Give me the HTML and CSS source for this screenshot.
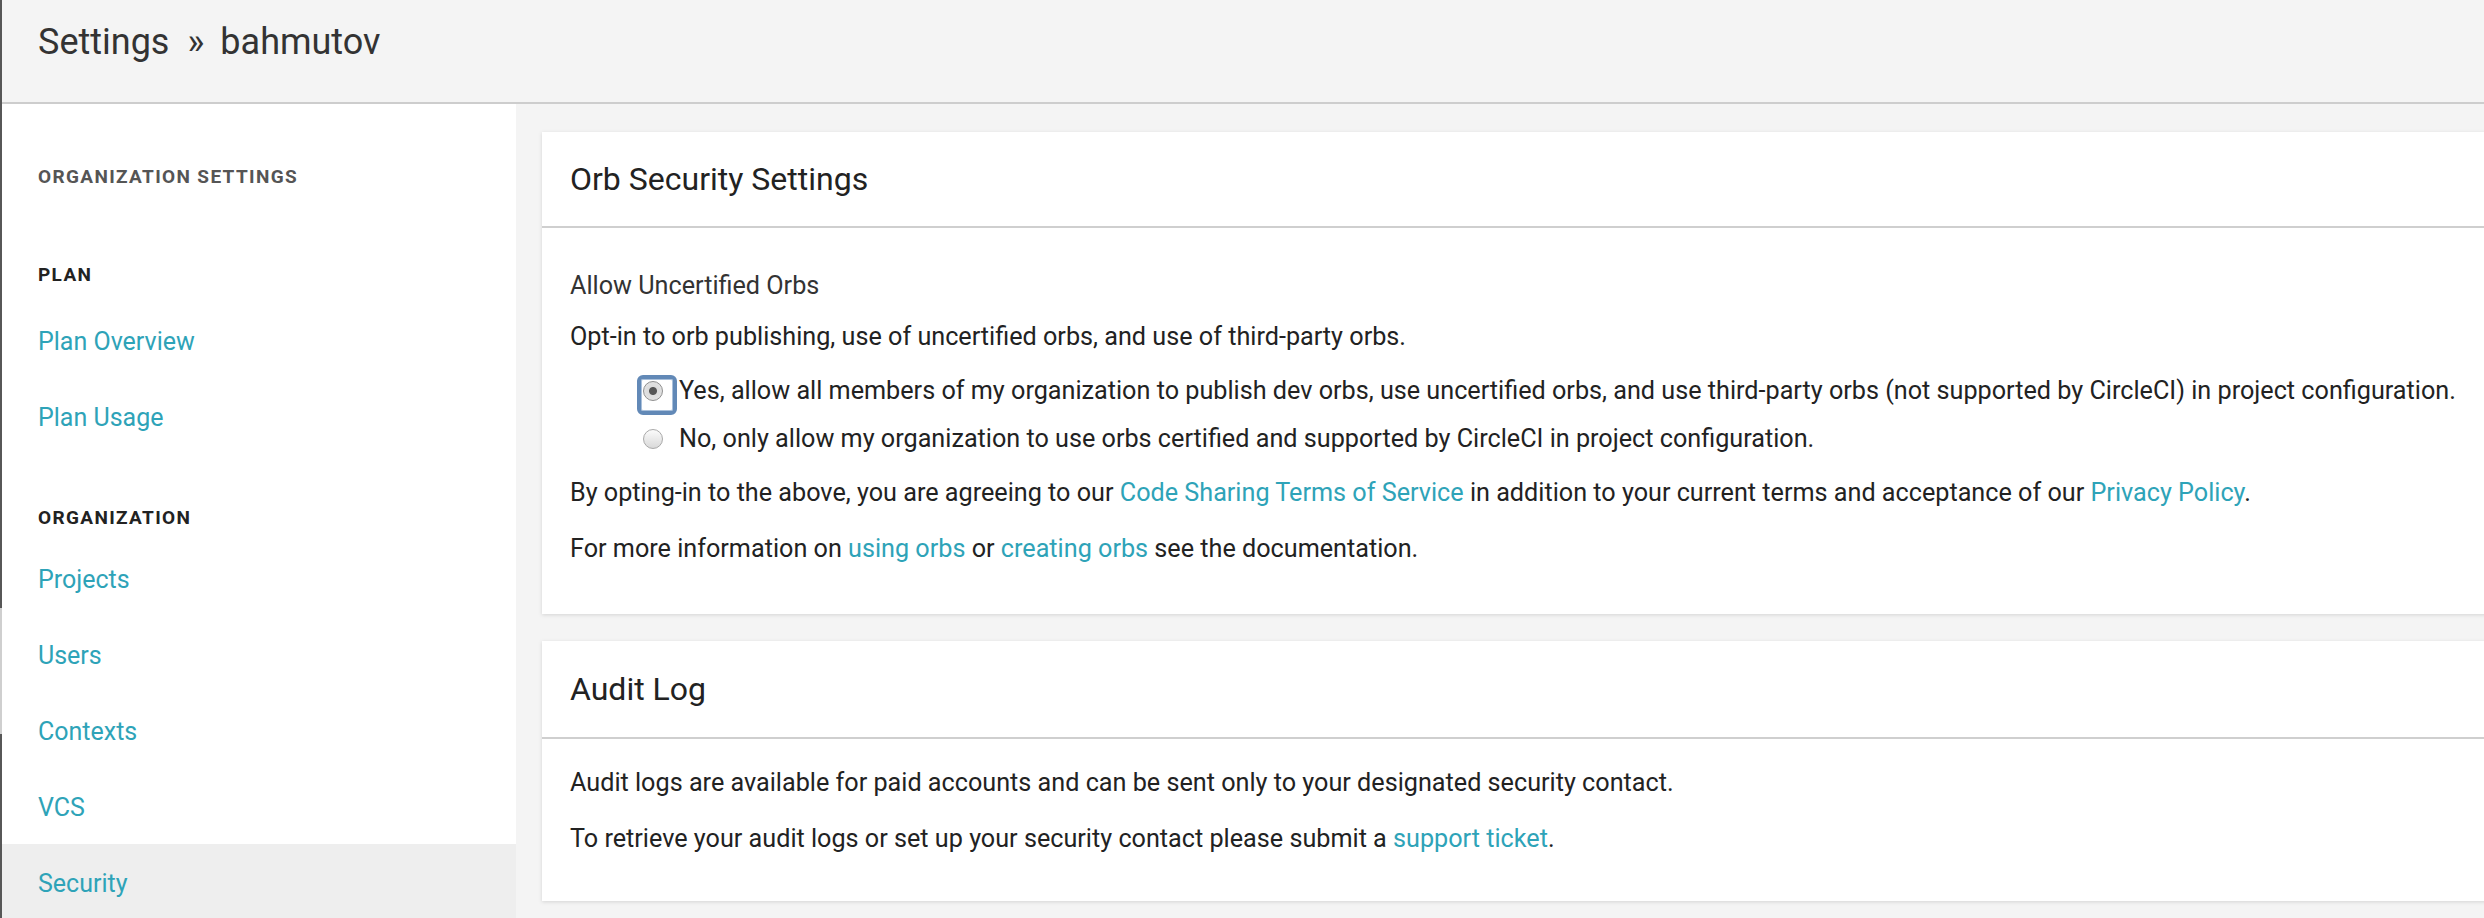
FILE: index.html
```html
<!DOCTYPE html>
<html lang="en">
<head>
<meta charset="utf-8">
<title>Settings » bahmutov</title>
<link rel="stylesheet" href="styles.css">
</head>
<body>
<div class="app">
  <div class="edge"></div>
  <div class="page">
    <header class="topbar">
      <h1 class="crumbs">Settings<span class="sep">»</span>bahmutov</h1>
    </header>
    <div class="layout">
      <nav class="sidebar">
        <div class="side-title">Organization Settings</div>
        <div class="side-group group-plan">
          <div class="group-head">Plan</div>
          <a class="side-link" href="#">Plan Overview</a>
          <a class="side-link" href="#">Plan Usage</a>
        </div>
        <div class="side-group group-org">
          <div class="group-head">Organization</div>
          <a class="side-link" href="#">Projects</a>
          <a class="side-link" href="#">Users</a>
          <a class="side-link" href="#">Contexts</a>
          <a class="side-link" href="#">VCS</a>
          <a class="side-link active" href="#">Security</a>
        </div>
      </nav>
      <main class="main">
        <section class="card card-orb">
          <div class="card-head">Orb Security Settings</div>
          <div class="card-body card-body-orb">
            <div class="label">Allow Uncertified Orbs</div>
            <p class="lead">Opt-in to orb publishing, use of uncertified orbs, and use of third-party orbs.</p>
            <div class="radios">
              <label class="radio-row"><span class="radio checked"></span>Yes, allow all members of my organization to publish dev orbs, use uncertified orbs, and use third-party orbs (not supported by CircleCI) in project configuration.</label>
              <label class="radio-row"><span class="radio"></span>No, only allow my organization to use orbs certified and supported by CircleCI in project configuration.</label>
            </div>
            <p class="after-radios">By opting-in to the above, you are agreeing to our <a href="#">Code Sharing Terms of Service</a> in addition to your current terms and acceptance of our <a href="#">Privacy Policy</a>.</p>
            <p class="para">For more information on <a href="#">using orbs</a> or <a href="#">creating orbs</a> see the documentation.</p>
          </div>
        </section>
        <section class="card card-audit">
          <div class="card-head">Audit Log</div>
          <div class="card-body card-body-audit">
            <p class="first">Audit logs are available for paid accounts and can be sent only to your designated security contact.</p>
            <p class="para">To retrieve your audit logs or set up your security contact please submit a <a href="#">support ticket</a>.</p>
          </div>
        </section>
      </main>
    </div>
  </div>
</div>
</body>
</html>
```

FILE: styles.css
```css
* { box-sizing: border-box; }

html, body {
  margin: 0;
  height: 100%;
}

body {
  font-family: Roboto, "Liberation Sans", sans-serif;
  color: #333;
  background: #f4f4f4;
  overflow: hidden;
}

a { color: #2ea3b8; text-decoration: none; }

.app {
  display: flex;
  min-height: 918px;
}

.edge {
  width: 2px;
  flex: none;
  background: linear-gradient(#575757 0, #575757 608px, #cfcfcf 608px, #cfcfcf 734px, #575757 734px);
}

.page {
  flex: 1;
  display: flex;
  flex-direction: column;
  min-width: 0;
}

.topbar {
  height: 104px;
  background: #f4f4f4;
  border-bottom: 2px solid #cdcdcd;
  padding: 21px 0 0 36px;
}

.crumbs {
  margin: 0;
  font-size: 36px;
  font-weight: 400;
  line-height: 42px;
  color: #333;
}

.sep { margin: 0 16px 0 18px; }

.layout {
  flex: 1;
  display: flex;
}

.sidebar {
  width: 514px;
  flex: none;
  background: #fff;
  padding-top: 61px;
}

.side-title,
.group-head {
  padding-left: 36px;
  font-size: 19px;
  line-height: 24px;
  font-weight: 700;
  letter-spacing: 1.35px;
  text-transform: uppercase;
}

.side-title { color: #555; }
.group-head { color: #222; }

.group-plan { margin-top: 74px; }
.group-org { margin-top: 52px; }

.group-plan .group-head { margin-bottom: 15px; }
.group-org .group-head { margin-bottom: 10px; }

.side-link {
  display: block;
  height: 76px;
  padding: 3px 0 0 36px;
  line-height: 73px;
  font-size: 25px;
  color: #2ea3b8;
}

.side-link.active { background: #eeeeee; }

.main {
  flex: 1;
  min-width: 0;
  overflow: hidden;
  padding: 28px 0 0 26px;
}

.card {
  background: #fff;
  margin-right: -40px;
  margin-bottom: 27px;
  box-shadow: 0 1px 4px rgba(0, 0, 0, 0.13);
}

.card-head {
  height: 96px;
  border-bottom: 2px solid #cfcfcf;
  padding-left: 28px;
  display: flex;
  align-items: center;
  font-size: 32px;
  font-weight: 400;
  color: #222;
}

.card-audit .card-head { height: 98px; }

.card-body {
  padding: 0 28px;
  font-size: 25.2px;
  line-height: 32px;
  color: #222;
}

.card-body p { margin: 0; }

.card-body-orb { padding-top: 42px; padding-bottom: 49px; }
.card-body-audit { padding-top: 28px; padding-bottom: 46px; }

.label { color: #333; }

.lead { margin-top: 19px !important; }

.radios {
  margin: 14px 0 14px 73px;
}

.radio-row {
  display: flex;
  align-items: center;
  height: 48px;
  gap: 16px;
}

.radio {
  position: relative;
  width: 20px;
  height: 20px;
  flex: none;
  border-radius: 50%;
  border: 1px solid #a9a9a9;
  background: linear-gradient(#fbfbfb, #d9d9d9);
}

.radio.checked {
  background: radial-gradient(circle, #555 0, #555 3.5px, #dcdcdc 4.5px, #e6e6e6 100%);
  border-color: #8f8f8f;
}

.radio.checked::before {
  content: "";
  position: absolute;
  left: -7px;
  top: -7px;
  width: 32px;
  height: 32px;
  border: 4px solid #6289b7;
  border-radius: 6px;
  box-shadow: inset 0 0 0 1px #a9c0db;
}

.para { margin-top: 24px !important; }
```
